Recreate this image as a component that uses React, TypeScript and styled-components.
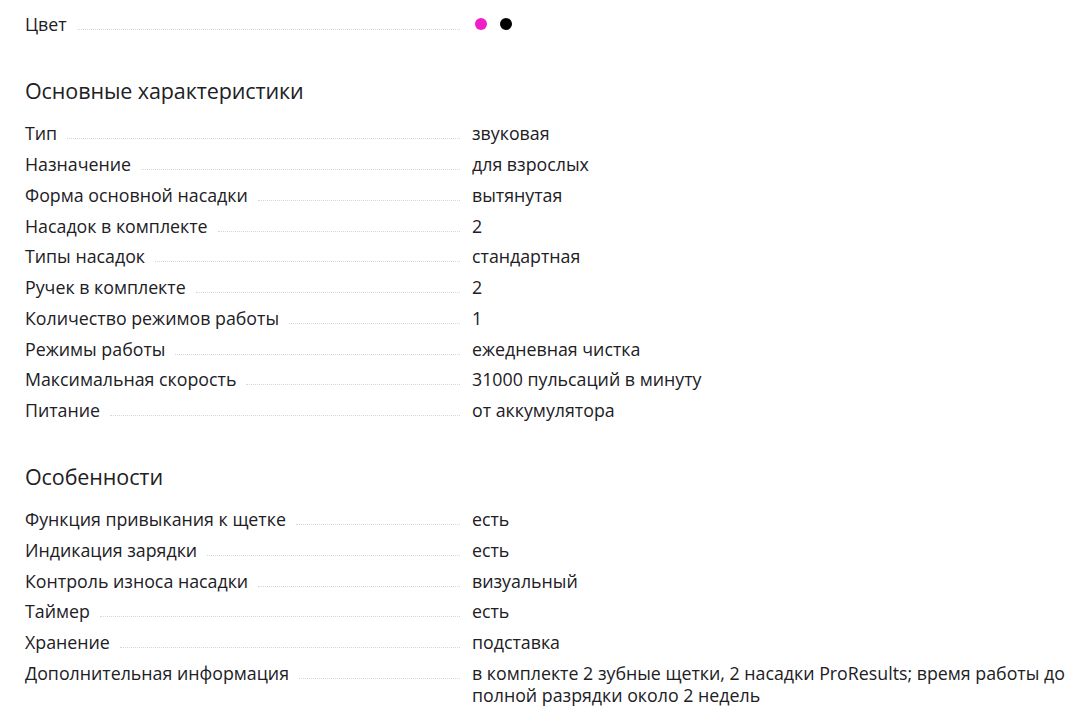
import React from "react";
import styled, { createGlobalStyle } from "styled-components";

const Global = createGlobalStyle`
  html, body { margin: 0; padding: 0; background: #fff; }
  body { font-family: "Open Sans", "Noto Sans", Arial, sans-serif; color: #21201f; }
`;

const Page = styled.div`
  padding: 9px 9px 0 25px;
  display: flex;
  flex-direction: column;
`;

const Section = styled.section<{ $top: number }>`
  margin-top: ${(p) => p.$top}px;
  display: flex;
  flex-direction: column;
`;

const Heading = styled.h2`
  margin: 0 0 14px 0;
  font-size: 21.5px;
  font-weight: 400;
  line-height: 26px;
  letter-spacing: -0.1px;
`;

const Row = styled.div`
  display: grid;
  grid-template-columns: 447px 1fr;
  align-items: start;
  font-size: 17.8px;
  line-height: 22px;
  padding: 4.4px 0;
`;

const Label = styled.div`
  display: flex;
  align-items: flex-end;
  height: 22px;
  padding-right: 12px;
`;

const LabelText = styled.span`
  white-space: nowrap;
`;

const Dots = styled.span`
  flex: 1;
  margin-left: 10px;
  margin-bottom: 5px;
  border-bottom: 1px dotted #d6d6d6;
`;

const Value = styled.div``;

const Swatches = styled.div`
  display: flex;
  align-items: center;
  gap: 13px;
  padding-left: 3px;
  height: 22px;
`;

const Dot = styled.span<{ $c: string }>`
  width: 12px;
  height: 12px;
  border-radius: 50%;
  background: ${(p) => p.$c};
`;

const main: [string, string][] = [
  ["Тип", "звуковая"],
  ["Назначение", "для взрослых"],
  ["Форма основной насадки", "вытянутая"],
  ["Насадок в комплекте", "2"],
  ["Типы насадок", "стандартная"],
  ["Ручек в комплекте", "2"],
  ["Количество режимов работы", "1"],
  ["Режимы работы", "ежедневная чистка"],
  ["Максимальная скорость", "31000 пульсаций в минуту"],
  ["Питание", "от аккумулятора"],
];

const features: [string, string][] = [
  ["Функция привыкания к щетке", "есть"],
  ["Индикация зарядки", "есть"],
  ["Контроль износа насадки", "визуальный"],
  ["Таймер", "есть"],
  ["Хранение", "подставка"],
  [
    "Дополнительная информация",
    "в комплекте 2 зубные щетки, 2 насадки ProResults; время работы до полной разрядки около 2 недель",
  ],
];

const SpecRow = ({ label, children }: { label: string; children: React.ReactNode }) => (
  <Row>
    <Label>
      <LabelText>{label}</LabelText>
      <Dots />
    </Label>
    <Value>{children}</Value>
  </Row>
);

export default function App() {
  return (
    <>
      <Global />
      <Page>
        <SpecRow label="Цвет">
          <Swatches>
            <Dot $c="#f01ec8" />
            <Dot $c="#000" />
          </Swatches>
        </SpecRow>
        <Section $top={38}>
          <Heading>Основные характеристики</Heading>
          {main.map(([l, v]) => (
            <SpecRow key={l} label={l}>{v}</SpecRow>
          ))}
        </Section>
        <Section $top={38}>
          <Heading>Особенности</Heading>
          {features.map(([l, v]) => (
            <SpecRow key={l} label={l}>{v}</SpecRow>
          ))}
        </Section>
      </Page>
    </>
  );
}
